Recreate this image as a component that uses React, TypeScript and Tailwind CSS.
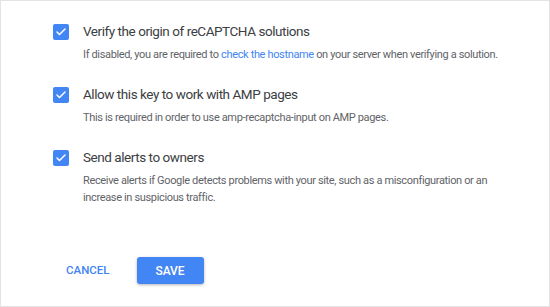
import { Check } from 'lucide-react'

interface OptionProps {
  title: string
  children: React.ReactNode
}

function Option({ title, children }: OptionProps) {
  return (
    <div className="flex gap-[14px]">
      <div className="mt-[3px] flex h-4 w-4 shrink-0 items-center justify-center rounded-[2px] bg-[#4285f4]">
        <Check className="h-3 w-3 text-white" strokeWidth={3} />
      </div>
      <div>
        <div className="text-[13.5px] leading-5 tracking-[-0.45px] text-[#3c4043]">{title}</div>
        <div className="mt-[5px] text-[11px] leading-[17px] tracking-[-0.35px] text-[#5f6368]">{children}</div>
      </div>
    </div>
  )
}

export default function App() {
  return (
    <div
      className="h-[307px] w-[550px] border border-[#e3e3e3] bg-white"
      style={{ fontFamily: 'Roboto, "Liberation Sans", sans-serif' }}
    >
      <div className="flex flex-col gap-[21px] pl-[52px] pt-[20px]">
        <Option title="Verify the origin of reCAPTCHA solutions">
          If disabled, you are required to{' '}
          <span className="text-[#4285f4]">check the hostname</span> on your server when verifying a solution.
        </Option>
        <Option title="Allow this key to work with AMP pages">
          This is required in order to use amp-recaptcha-input on AMP pages.
        </Option>
        <Option title="Send alerts to owners">
          Receive alerts if Google detects problems with your site, such as a misconfiguration or an
          <br />
          increase in suspicious traffic.
        </Option>
      </div>

      <div className="mt-[51px] flex items-center pl-[65px]">
        <button className="text-[11.5px] font-medium text-[#4285f4]">CANCEL</button>
        <button className="ml-[27px] h-[27px] w-[67px] rounded-[3px] bg-[#4285f4] text-[12px] font-medium text-white shadow-[0_1px_3px_rgba(0,0,0,0.3)]">
          SAVE
        </button>
      </div>
    </div>
  )
}
